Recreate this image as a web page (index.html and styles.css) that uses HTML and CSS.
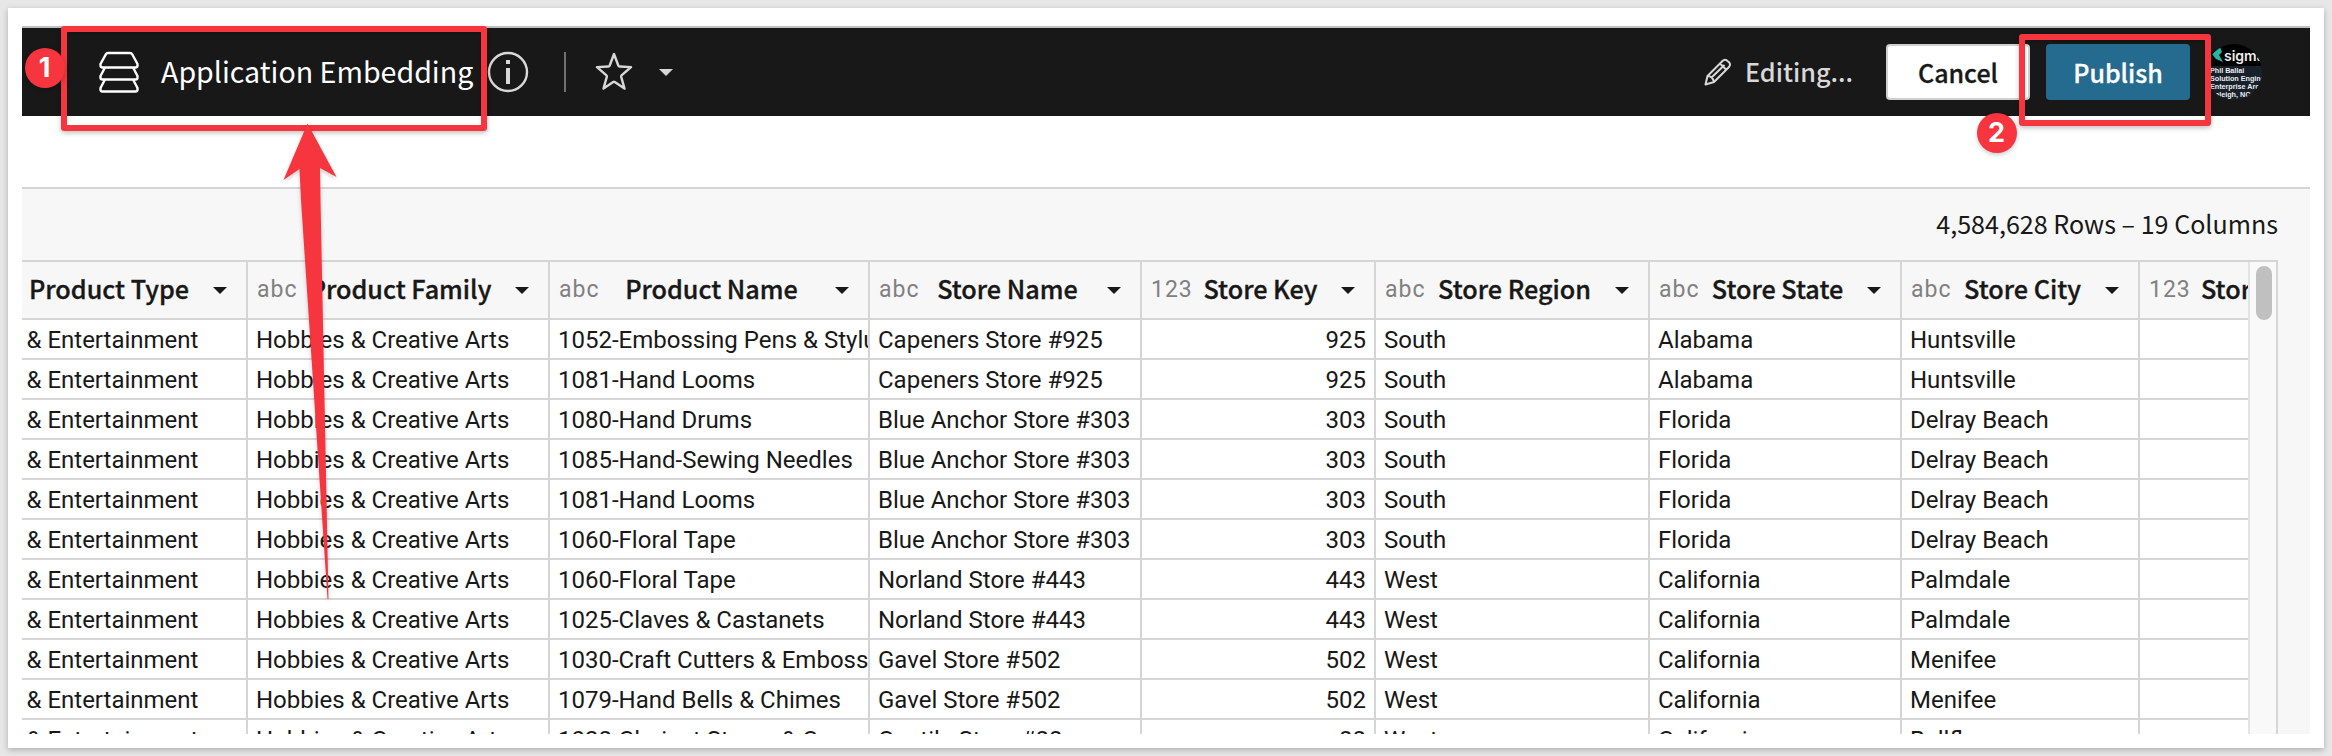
FILE: index.html
```html
<!DOCTYPE html>
<html lang="en">
<head>
<meta charset="utf-8">
<title>Application Embedding</title>
<link rel="stylesheet" href="styles.css">
</head>
<body>
<main class="card">
  <div class="screen">
    <header class="topbar">
      <div class="doc">
        <svg class="stack" width="42" height="42" viewBox="0 0 42 42"><path d="M10 2h22q1.500 0 2.200 1.300l5.300 9.700v1.500q0 2-2 2H4.500q-2 0-2-2V13L7.800 3.300Q8.500 2 10 2zM7 16.500L2.500 25v1.500q0 2 2 2h33q2 0 2-2V25L35 16.500M7 28.500L2.500 37v1.500q0 2 2 2h33q2 0 2-2V37L35 28.500"/></svg>
        <span class="title">Application Embedding</span>
        <svg class="info" width="42" height="42" viewBox="0 0 42 42"><circle cx="21" cy="21" r="19"/><path d="M19 9h4v4h-4zM19 17h4v16h-4z"/></svg>
        <span class="divider"></span>
        <svg class="star" width="38" height="38" viewBox="0 0 38 38"><path d="M19 2l4.300 11.500q.4 1 1.400 1l11.300.6-9.200 8q-.8.700-.6 1.700L29.500 36.500 19.800 30q-.8-.5-1.600 0L8.500 36.500l3.300-11.700q.2-1-.6-1.700L2 15.100l11.300-.6q1 0 1.400-1z"/></svg>
        <span class="caret light"></span>
      </div>
      <div class="actions">
        <svg class="pencil" width="28" height="28" viewBox="0 0 28 28"><path d="M1.500 26.500L3.500 18 18.500 3q2-2 4-.8l2.500 2q2 2.300 0 4.800L10 24zM3.500 18q5 0 6.500 6M16 5.500l6.500 6.500M7 20L20.500 7"/></svg>
        <span class="editing">Editing...</span>
        <button class="btn cancel">Cancel</button>
        <button class="btn publish">Publish</button>
        <div class="avatar">
          <div class="brand"><svg width="11" height="16" viewBox="0 0 11 16"><path d="M0 7L8 0 10 5 7 8 11 15 4 12z"/></svg><span>sigma</span></div>
          <div class="bio">Phil Ballai<br>Solution Engineer<br>Enterprise Arch<br>Raleigh, NC</div>
        </div>
      </div>
    </header>
    <section class="panel">
      <div class="summary"><span class="count">4,584,628 Rows – 19 Columns</span></div>
      <div class="frame">
        <div class="viewport"><div class="grid" id="grid"></div></div>
        <div class="scroll"><div class="thumb"></div></div>
      </div>
    </section>
  </div>
</main>
<div class="mark mark-title"></div>
<div class="mark mark-publish"></div>
<div class="badge badge-one">1</div>
<div class="badge badge-two">2</div>
<svg class="arrow" width="80" height="490" viewBox="270 115 80 490"><path d="M307.500 123.500L336.500 177 320 168 320.500 200 328.500 599H327.500L301 200 299.500 169 283.500 180z"/></svg>
<script src="grid.js"></script>
</body>
</html>
```
FILE: styles.css
```css
* { box-sizing: border-box; }
html { height: 756px; overflow: hidden; }
body { margin: 0; width: 2332px; height: 756px; padding: 8px; background: #e7e7e7; overflow: hidden; font-family: Roboto, sans-serif; color: #181818; position: relative; }
.card { width: 2316px; height: 740px; padding: 18px 14px; background: #fff; box-shadow: 0 2px 6px rgba(0,0,0,.25); }
.screen { height: 708px; overflow: hidden; display: flex; flex-direction: column; }
.topbar { flex: none; height: 90px; border-top: 2px solid #c0c0c0; background: #181818; display: flex; justify-content: space-between; align-items: center; padding: 0 48px 0 76px; font-family: "Noto Sans CJK SC", sans-serif; }
.doc, .actions { display: flex; align-items: center; }
.topbar svg { flex: none; fill: none; stroke-linejoin: round; }
.stack { stroke: #fff; stroke-width: 2.4; }
.title { width: 313px; margin-left: 21px; padding-bottom: 2px; font-size: 28.600px; line-height: 42px; color: #fff; white-space: nowrap; }
.info { margin-left: 13px; }
.info circle { stroke: #d8d8d8; stroke-width: 2.4; }
.info path { fill: #d8d8d8; }
.divider { width: 2px; height: 40px; margin-left: 35px; background: #707070; }
.star { margin-left: 29px; margin-bottom: 2px; stroke: #d8d8d8; stroke-width: 2.4; }
.caret { flex: none; border: 7px solid transparent; border-top-color: #181818; border-bottom: 0; width: 14px; height: 7px; }
.caret.light { border-top-color: #d8d8d8; margin-left: 26px; }
.topbar .pencil { stroke: #d8d8d8; stroke-width: 2; }
.editing { width: 109px; margin-left: 13px; padding-bottom: 3px; font-size: 25.200px; font-weight: 500; color: #d8d8d8; white-space: nowrap; }
.btn { width: 144px; height: 56px; padding: 0 0 1px; border: 2px solid #d0d0d0; border-radius: 4px; background: #fff; font: 500 25px "Noto Sans CJK SC", sans-serif; color: #181818; -webkit-text-stroke: .3px; }
.cancel { margin-left: 32px; }
.publish { margin-left: 16px; background: #246b8f; border-color: #246b8f; color: #fff; }
.avatar { width: 56px; height: 56px; margin-left: 16px; border-radius: 50%; overflow: hidden; background: #17212c; color: #eee; font: bold 7.200px/8.100px "Liberation Sans", sans-serif; white-space: nowrap; }
.brand { height: 22px; background: #000; display: flex; align-items: center; gap: 1px; padding-left: 6px; font: 600 14px Inter, sans-serif; }
.brand svg { fill: #27b8a3; }
.bio { padding: 1px 0 0 4px; }
.panel { flex: 1; margin-top: 71px; border-top: 2px solid #d5d5d5; background: #f7f7f7; padding-right: 32px; }
.summary { height: 71px; padding-bottom: 4px; display: flex; justify-content: flex-end; align-items: center; font: 25.100px "Noto Sans CJK SC", sans-serif; }
.frame { height: 480px; display: flex; border-top: 2px solid #d5d5d5; border-right: 2px solid #d5d5d5; }
.viewport { width: 2226px; overflow: hidden; }
.grid { width: 2450px; margin-left: -55px; }
.row { display: grid; grid-template-columns: 281px 302px 320px 272px 234px 274px 252px 238px 277px; height: 40px; background: #fff; }
.row.head { height: 58px; background: #f7f7f7; }
.cell { border-right: 2px solid #d5d5d5; border-bottom: 2px solid #d5d5d5; padding: 0 8px; line-height: 40px; font-size: 24px; white-space: nowrap; overflow: hidden; }
.cell.first { padding-left: 59.500px; }
.cell.num { text-align: right; }
.head .cell { display: grid; grid-template-columns: 60px 1fr 55px; align-items: center; padding: 0; }
.kind { padding-left: 9px; font-size: 23px; line-height: 56px; color: #808080; letter-spacing: 1px; }
.name { text-align: center; padding: 0 0 3px; font: 500 25.200px/53px "Noto Sans CJK SC", sans-serif; -webkit-text-stroke: .35px #181818; }
.name.start { text-align: left; padding-left: 1px; }
.head .caret { margin-left: 22px; }
.scroll { width: 28px; padding: 4px 0 0 6px; border-left: 2px solid #e3e3e3; background: #f9f9f9; }
.thumb { width: 16px; height: 54px; border-radius: 8px; background: #c0c0c0; }
.mark { position: absolute; border: 6px solid #f6353f; border-radius: 3px; box-shadow: 0 2px 5px rgba(0,0,0,.25), inset 0 2px 3px rgba(0,0,0,.15); }
.mark-title { left: 61px; top: 26px; width: 426px; height: 105px; }
.mark-publish { left: 2019px; top: 34px; width: 192px; height: 92px; }
.badge { position: absolute; width: 40px; height: 40px; border-radius: 50%; background: #f6353f; color: #fff; font: bold 27px/39px Inter, sans-serif; text-align: center; box-shadow: 0 2px 4px rgba(0,0,0,.2); }
.badge-one { left: 24.500px; top: 48px; }
.badge-two { left: 1976.500px; top: 113px; }
.arrow { position: absolute; left: 270px; top: 115px; fill: #f6353f; filter: drop-shadow(0 2px 2px rgba(0,0,0,.2)); }
```
FILE: grid.js
```js
const columns = [
  ["abc", "Product Type"], ["abc", "Product Family"], ["abc", "Product Name"],
  ["abc", "Store Name"], ["123", "Store Key"], ["abc", "Store Region"],
  ["abc", "Store State"], ["abc", "Store City"], ["123", "Store Zip"]
];
const rows = [
  ["1052-Embossing Pens & Stylus", "Capeners Store #925", "925", "South", "Alabama", "Huntsville"],
  ["1081-Hand Looms", "Capeners Store #925", "925", "South", "Alabama", "Huntsville"],
  ["1080-Hand Drums", "Blue Anchor Store #303", "303", "South", "Florida", "Delray Beach"],
  ["1085-Hand-Sewing Needles", "Blue Anchor Store #303", "303", "South", "Florida", "Delray Beach"],
  ["1081-Hand Looms", "Blue Anchor Store #303", "303", "South", "Florida", "Delray Beach"],
  ["1060-Floral Tape", "Blue Anchor Store #303", "303", "South", "Florida", "Delray Beach"],
  ["1060-Floral Tape", "Norland Store #443", "443", "West", "California", "Palmdale"],
  ["1025-Claves & Castanets", "Norland Store #443", "443", "West", "California", "Palmdale"],
  ["1030-Craft Cutters & Embossers", "Gavel Store #502", "502", "West", "California", "Menifee"],
  ["1079-Hand Bells & Chimes", "Gavel Store #502", "502", "West", "California", "Menifee"],
  ["1028-Clarinet Straps & C", "Gentile Store #88", "88", "West", "California", "Bellflower"]
];
const add = (parent, tag, cls, text) => {
  const el = document.createElement(tag);
  el.className = cls;
  if (text) el.textContent = text;
  parent.append(el);
  return el;
};
const grid = document.getElementById("grid");
const head = add(grid, "div", "row head");
columns.forEach(([kind, name], i) => {
  const cell = add(head, "div", "cell");
  add(cell, "span", "kind", i ? kind : "");
  add(cell, "span", i === 8 ? "name start" : "name", name);
  add(cell, "span", "caret");
});
rows.forEach(r => {
  const row = add(grid, "div", "row");
  ["& Entertainment", "Hobbies & Creative Arts", ...r, ""].forEach((text, i) => {
    add(row, "div", "cell" + (i === 0 ? " first" : i === 4 ? " num" : ""), text);
  });
});
```
